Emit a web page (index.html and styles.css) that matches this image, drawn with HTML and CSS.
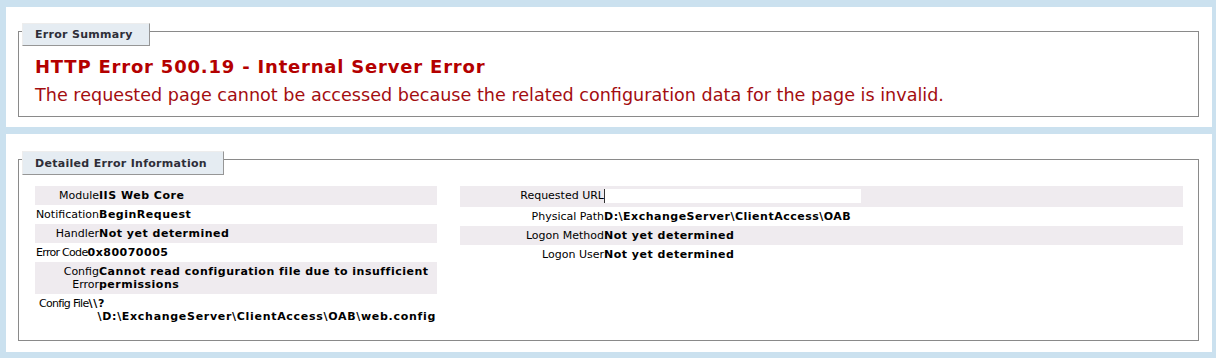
FILE: index.html
```html
<!DOCTYPE html>
<html lang="en">
<head>
  <meta charset="UTF-8" />
  <title>IIS 8.5 Detailed Error - 500.19 - Internal Server Error</title>
  <link rel="stylesheet" href="styles.css">
</head>
<body>
  <div class="panel">
    <div class="box">
      <div class="legend">Error Summary</div>
      <h2>HTTP Error 500.19 - Internal Server Error</h2>
      <h3>The requested page cannot be accessed because the related configuration data for the page is invalid.</h3>
    </div>
  </div>

  <div class="panel panel-details">
    <div class="box">
      <div class="legend">Detailed Error Information</div>
      <div class="details">
        <div class="details-left">
          <div class="row alt"><div class="lbl">Module</div><div class="val">IIS Web Core</div></div>
          <div class="row"><div class="lbl">Notification</div><div class="val">BeginRequest</div></div>
          <div class="row alt"><div class="lbl">Handler</div><div class="val">Not yet determined</div></div>
          <div class="row"><div class="lbl lbl-free">Error Code</div><div class="val">0x80070005</div></div>
          <div class="row alt"><div class="lbl">Config Error</div><div class="val">Cannot read configuration file due to insufficient permissions</div></div>
          <div class="row"><div class="lbl lbl-free lbl-file">Config File</div><div class="val val-hang">\\?<br>\D:\ExchangeServer\ClientAccess\OAB\web.config</div></div>
        </div>
        <div class="details-right">
          <div class="row alt"><div class="lbl lbl-wide">Requested URL</div><div class="val"><span class="redacted"></span></div></div>
          <div class="row"><div class="lbl lbl-wide">Physical Path</div><div class="val">D:\ExchangeServer\ClientAccess\OAB</div></div>
          <div class="row alt"><div class="lbl lbl-wide">Logon Method</div><div class="val">Not yet determined</div></div>
          <div class="row"><div class="lbl lbl-wide">Logon User</div><div class="val">Not yet determined</div></div>
        </div>
      </div>
    </div>
  </div>
</body>
</html>
```

FILE: styles.css
```css
body {
  margin: 0;
  padding: 7px 4px 6px 6px;
  font-family: "DejaVu Sans", Verdana, sans-serif;
  font-size: 11px;
  color: #000;
  background: #cbe1ef;
}
.panel {
  background: #fff;
  padding: 24px 13px 10px 12px;
}
.panel-details {
  margin-top: 7px;
  padding-top: 25px;
  padding-bottom: 11px;
}
.box {
  padding: 0 15px 10px 15px;
  border: 1px solid #8a8a8a;
}
.legend {
  width: fit-content;
  color: #2e2e38;
  padding: 4px 16px 4px 12px;
  margin: -9px 0 0 -12px;
  border-top: 1px solid #ededed;
  border-left: 1px solid #ededed;
  border-right: 1px solid #969696;
  border-bottom: 1px solid #969696;
  background: #e5ecf2;
  font-weight: bold;
  line-height: 13px;
  letter-spacing: 0.3px;
}
.panel-details .legend {
  padding-top: 5px;
}
h2 {
  margin: 10px 0 0 1px;
  font-size: 18px;
  line-height: 22px;
  letter-spacing: 0.8px;
  color: #b40000;
}
h3 {
  margin: 6px 0 0 1px;
  font-size: 17.6px;
  line-height: 22px;
  font-weight: normal;
  color: #a30d10;
}
.details {
  display: flex;
  gap: 23px;
  margin: 11px 0 4px 1px;
}
.details-left {
  width: 402px;
}
.details-right {
  flex: 1;
}
.row {
  display: flex;
  padding: 3px 0;
  line-height: 13px;
}
.row.alt {
  background: #efebef;
}
.lbl {
  width: 64px;
  flex-shrink: 0;
  text-align: right;
}
.lbl-free {
  width: auto;
  padding-left: 1px;
  letter-spacing: -0.7px;
}
.lbl-file {
  padding-left: 4px;
}
.lbl-wide {
  width: 144px;
}
.val {
  font-weight: bold;
  letter-spacing: 0.5px;
}
.val-hang {
  padding-left: 9px;
  text-indent: -9px;
  letter-spacing: 0.7px;
}
.redacted {
  display: inline-block;
  width: 256px;
  height: 14px;
  vertical-align: -2px;
  background: #fff;
  border-left: 1px solid #333;
}
```
